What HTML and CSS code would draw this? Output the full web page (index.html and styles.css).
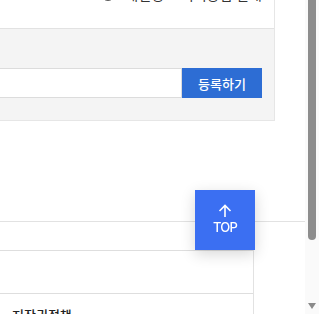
FILE: index.html
```html
<!DOCTYPE html>
<html lang="ko">
<head>
<meta charset="utf-8">
<link rel="stylesheet" href="styles.css">
</head>
<body>
<div class="page">
  <section class="info">
    <div class="info-top">
      <div class="contact">
        <span class="ring"></span>
        <span class="contact-text">개인정보 처리방침 안내</span>
      </div>
    </div>
    <div class="form-box">
      <div class="form-row">
        <input class="field" type="text">
        <button class="submit">등록하기</button>
      </div>
    </div>
  </section>
  <div class="list">
    <div class="list-head"></div>
    <div class="table">
      <div class="row"></div>
      <div class="row"></div>
    </div>
  </div>
  <footer class="foot">
    <span class="foot-link">저작권정책</span>
  </footer>
</div>
<a class="top-btn" href="#">
  <svg class="top-arrow" width="14" height="14" viewBox="0 0 14 14"><path d="M7 13V1.5M1.5 7L7 1.5L12.5 7" fill="none" stroke="#fff" stroke-width="1.6"/></svg>
  <span class="top-label">TOP</span>
</a>
<div class="scrollbar">
  <div class="thumb"></div>
  <div class="arrow-down"></div>
</div>
</body>
</html>
```

FILE: styles.css
```css
html, body {
  margin: 0;
  padding: 0;
  background: #fff;
  overflow: hidden;
  font-family: "Noto Sans CJK KR", "Noto Sans", sans-serif;
}
.page {
  width: 305px;
}
.info {
  width: 274px;
  border-right: 1px solid #e6e6e6;
}
.info-top {
  height: 28px;
  border-bottom: 1px solid #e2e2e2;
  display: flex;
  justify-content: flex-end;
  overflow: hidden;
}
.contact {
  display: flex;
  align-items: center;
  gap: 10px;
  margin-top: -14px;
  height: 16px;
  padding-right: 12px;
  font-size: 14px;
  color: #333;
}
.ring {
  width: 12px;
  height: 12px;
  border: 1.5px solid #555;
  border-radius: 50%;
}
.form-box {
  background: #f4f4f4;
  border-bottom: 1px solid #e6e6e6;
  padding: 39px 12px 22px 0;
}
.form-row {
  display: flex;
  height: 30px;
}
.field {
  flex: 1;
  margin: 0;
  border: 1px solid #dcdcdc;
  border-left: none;
  background: #fff;
  height: 30px;
  box-sizing: border-box;
}
.submit {
  width: 80px;
  height: 30px;
  margin: 0;
  border: none;
  background: #2d6dd4;
  color: #fff;
  font-family: "Noto Sans CJK KR", sans-serif;
  font-size: 13px;
  font-weight: 500;
}
.list {
  margin-top: 100px;
}
.list-head {
  height: 28px;
  border-top: 1px solid #e2e2e2;
}
.table {
  width: 253px;
  border-top: 1px solid #dedede;
  border-right: 1px solid #e2e2e2;
}
.row {
  height: 42px;
  border-bottom: 1px solid #dedede;
}
.row + .row {
  height: 30px;
  border-bottom: none;
}
.foot {
  padding-left: 12px;
  margin-top: -19px;
  line-height: 16px;
}
.foot-link {
  font-size: 13px;
  color: #222;
  font-weight: 500;
}
.top-btn {
  position: fixed;
  left: 195px;
  top: 190px;
  width: 60px;
  height: 60px;
  background: #3b6ff2;
  box-shadow: 0 4px 14px rgba(0, 0, 0, 0.16);
  display: flex;
  flex-direction: column;
  align-items: center;
  justify-content: center;
  text-decoration: none;
  color: #fff;
}
.top-arrow {
  display: block;
  margin-top: -2px;
}
.top-label {
  font-family: "Inter", "Noto Sans", sans-serif;
  font-size: 13px;
  font-weight: 500;
  letter-spacing: -0.8px;
  line-height: 16px;
  margin-top: 1px;
}
.scrollbar {
  position: fixed;
  right: 0;
  top: 0;
  width: 14px;
  height: 314px;
  background: #fafafa;
}
.thumb {
  margin-left: 3px;
  width: 8px;
  height: 240px;
  background: #8d8d8d;
  border-radius: 0 0 4px 4px;
}
.arrow-down {
  margin: 63px 0 0 3px;
  width: 0;
  height: 0;
  border-left: 4px solid transparent;
  border-right: 4px solid transparent;
  border-top: 6px solid #8a8a8a;
}
```
